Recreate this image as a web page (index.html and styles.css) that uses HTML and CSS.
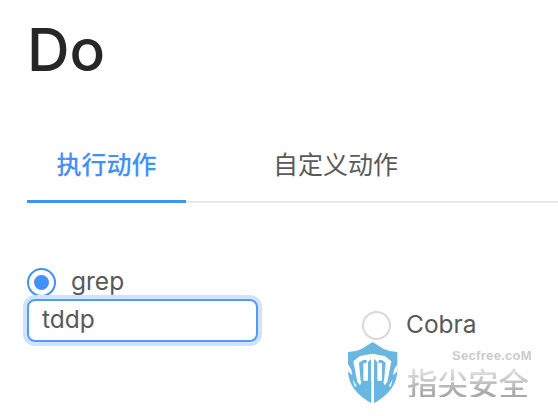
FILE: index.html
```html
<!DOCTYPE html>
<html lang="zh">
<head>
<meta charset="utf-8">
<title>Do</title>
<link rel="stylesheet" href="styles.css">
</head>
<body>
<main class="page">
  <h1 class="title">Do</h1>
  <nav class="tabs">
    <div class="tab tab-active">执行动作</div>
    <div class="tab tab-second">自定义动作</div>
  </nav>
  <section class="options">
    <div class="option-col option-first">
      <label class="radio-row">
        <span class="radio radio-on"><span class="radio-dot"></span></span>
        <span class="radio-label">grep</span>
      </label>
      <div class="input">tddp</div>
    </div>
    <div class="option-col option-second">
      <label class="radio-row">
        <span class="radio"></span>
        <span class="radio-label">Cobra</span>
      </label>
    </div>
  </section>
</main>
<div class="watermark">
  <svg class="wm-logo" width="60" height="70" viewBox="0 0 180 210">
    <path fill="#69b7e1" d="M86 12 L118 32 Q138 42 160 42 L160 100 Q158 160 86 198 Q14 160 12 100 L12 42 Q34 42 54 32 Z"/>
    <path fill="#fff" d="M28 70 L48 54 L85 47 L122 54 L142 70 L130 132 L122 142 L116 128 L54 128 L48 142 L40 132 Z"/>
    <path fill="#69b7e1" d="M45 74 L58 66 L68 66 L68 74 L58 76 L58 134 L50 130 Z M125 74 L114 66 L104 66 L104 74 L114 76 L114 134 L120 130 Z M72 72 L82 62 L82 140 L72 140 Z M90 62 L100 72 L100 140 L90 140 Z"/>
    <path fill="#fff" d="M82 58 H90 V198 H82 Z"/>
    <path fill="#fff" d="M12 78 L22 96 L25 112 L12 100 Z M160 78 L150 96 L147 112 L160 100 Z M26 124 L38 144 L32 146 Z M146 124 L134 144 L140 146 Z"/>
  </svg>
  <div class="wm-text">
    <div class="wm-site">Secfree.coM</div>
    <div class="wm-name">指尖安全</div>
  </div>
</div>
</body>
</html>
```
FILE: styles.css
```css
html, body {
  margin: 0;
  padding: 0;
  background: #fff;
}
body {
  width: 558px;
  height: 416px;
  overflow: hidden;
  position: relative;
  font-family: Inter, "Noto Sans CJK SC", "Liberation Sans", sans-serif;
}
.page {
  padding: 14px 0 0 27px;
}
.title {
  margin: 0;
  font-size: 59px;
  line-height: 72px;
  font-weight: 500;
  color: #262626;
}
.tabs {
  display: flex;
  margin-top: 44px;
  height: 71px;
  border-bottom: 2px solid #e8e8e8;
}
.tab {
  font-size: 25px;
  line-height: 70px;
  text-align: center;
  color: #595959;
}
.tab-active {
  width: 159px;
  height: 70px;
  color: #4390f7;
  font-weight: 500;
  border-bottom: 3px solid #4390f7;
}
.tab-second {
  margin-left: 87px;
}
.options {
  display: flex;
  margin-top: 65px;
}
.option-col {
  display: flex;
  flex-direction: column;
}
.option-first {
  width: 335px;
}
.option-second {
  margin-top: 43px;
}
.radio-row {
  display: flex;
  align-items: center;
  gap: 15px;
  height: 29px;
}
.radio {
  width: 29px;
  height: 29px;
  box-sizing: border-box;
  border: 2px solid #d9d9d9;
  border-radius: 50%;
  display: flex;
  align-items: center;
  justify-content: center;
}
.radio-on {
  border-color: #4390f7;
}
.radio-dot {
  width: 15px;
  height: 15px;
  border-radius: 50%;
  background: #4390f7;
}
.radio-label {
  font-size: 24.5px;
  line-height: 29px;
  padding-bottom: 3px;
  color: #595959;
}
.input {
  width: 231px;
  height: 43px;
  margin-top: 2px;
  box-sizing: border-box;
  border: 2px solid #4f9bf8;
  border-radius: 8px;
  box-shadow: 0 0 0 4px #cfe3fc;
  padding-left: 13px;
  font-size: 24.5px;
  line-height: 37px;
  color: #595959;
}
.watermark {
  position: absolute;
  left: 344px;
  top: 338px;
  display: flex;
}
.wm-logo {
  display: block;
  filter: blur(0.4px);
}
.wm-text {
  width: 126px;
  display: flex;
  flex-direction: column;
  align-items: flex-end;
}
.wm-site {
  font-family: "Liberation Sans", sans-serif;
  font-size: 13px;
  font-weight: 700;
  letter-spacing: 0.3px;
  color: #cbcbcb;
  line-height: 13px;
  margin-top: 11px;
  margin-right: -2px;
}
.wm-name {
  font-family: "Noto Sans CJK SC", sans-serif;
  font-size: 30.5px;
  font-weight: 500;
  line-height: 30px;
  margin-top: 5px;
  margin-right: 1px;
  color: #c2c2c2;
  background: linear-gradient(#dedede 15%, #a9a9a9 85%);
  -webkit-background-clip: text;
  background-clip: text;
  -webkit-text-fill-color: transparent;
  filter: blur(0.4px);
}
```
